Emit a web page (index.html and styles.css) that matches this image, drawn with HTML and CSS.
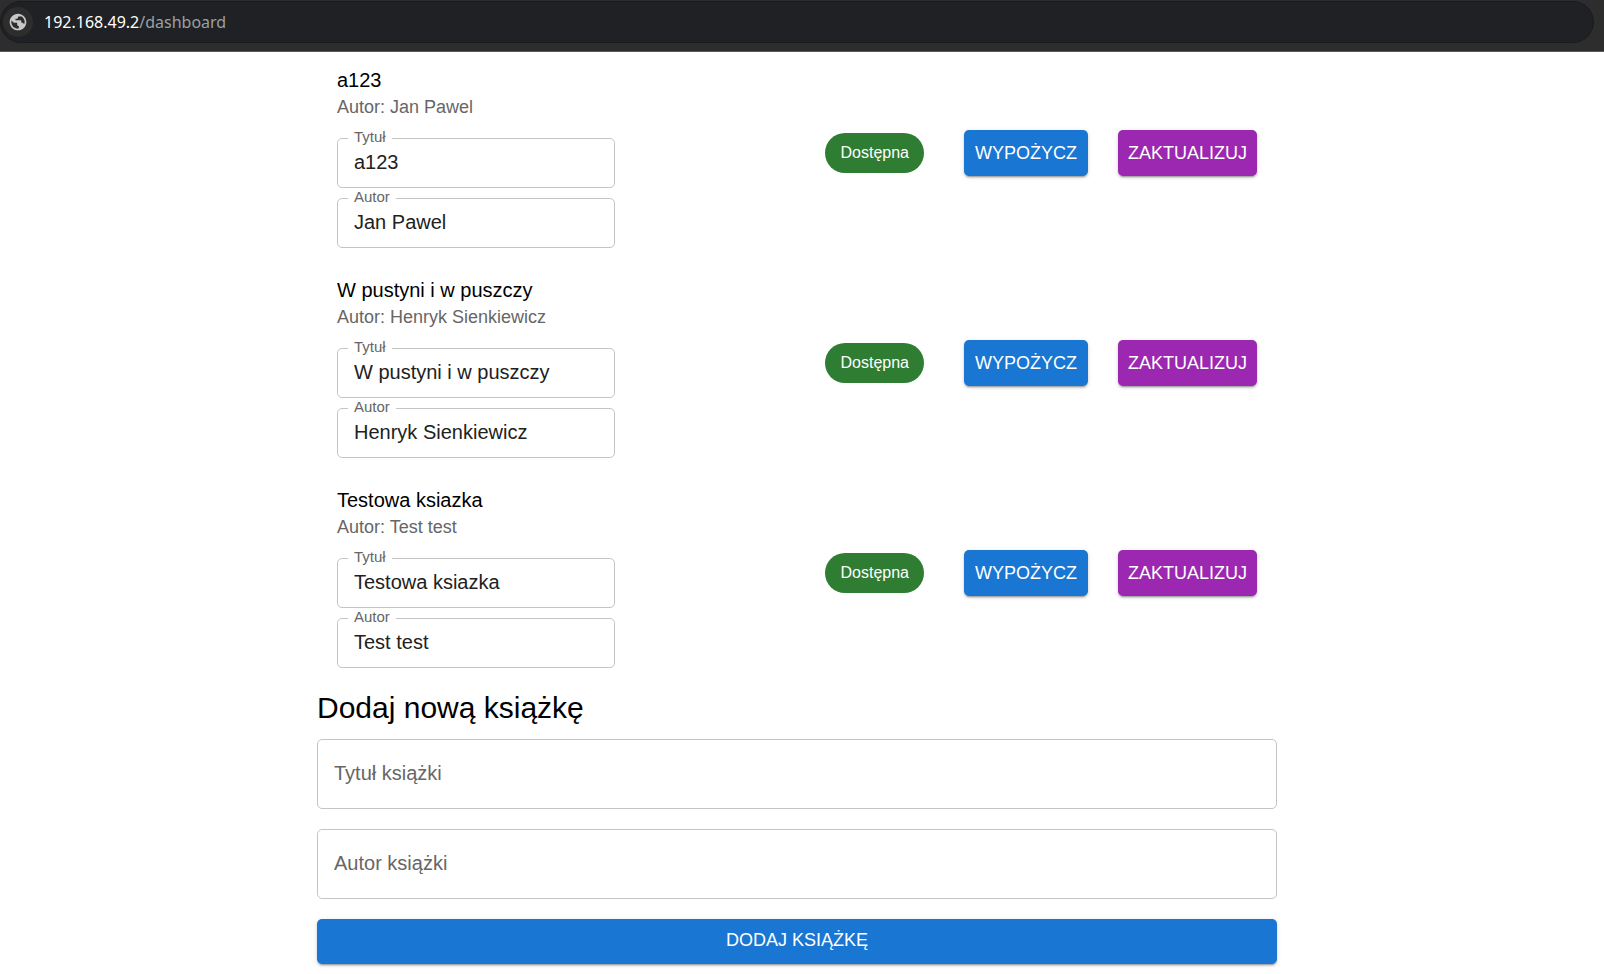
FILE: index.html
```
<!DOCTYPE html>
<html lang="pl">
<head>
<meta charset="utf-8">
<title>Dashboard</title>
<link rel="stylesheet" href="styles.css">
</head>
<body>
<header class="browser">
  <div class="address">
    <span class="site">
      <svg class="globe" viewBox="0 0 24 24" aria-hidden="true"><path d="M12 2C6.480 2 2 6.480 2 12s4.480 10 10 10 10-4.480 10-10S17.520 2 12 2zm-8 10c0-.620.080-1.210.210-1.790L7 13h4v2c0 1 .6 1.800 2 1.800v2.200c0 .400-.6.700-1 .970C7.500 19.900 4 16.400 4 12zm15.200 2.800c-.3-1.100-1.200-1.800-2.200-1.800h-1v-2c0-.6-.4-1-1-1H9V8h2c.550 0 1-.450 1-1V5.500h2c1 0 1.500-.5 1.800-.550C18.300 6.200 20 9 20 12c0 1-.3 1.900-.8 2.800z"/></svg>
    </span>
    <span class="url"><span class="host">192.168.49.2</span>/dashboard</span>
  </div>
</header>
<main class="page">
  <ul class="books">
    <li class="book">
      <div class="info">
        <div class="title">a123</div>
        <div class="author">Autor: Jan Pawel</div>
        <div class="fields">
          <div class="field"><label for="t1">Tytuł</label><input id="t1" type="text" value="a123"></div>
          <div class="field"><label for="a1">Autor</label><input id="a1" type="text" value="Jan Pawel"></div>
        </div>
      </div>
      <span class="chip">Dostępna</span>
      <div class="actions">
        <button class="btn primary" type="button">WYPOŻYCZ</button>
        <button class="btn secondary" type="button">ZAKTUALIZUJ</button>
      </div>
    </li>
    <li class="book">
      <div class="info">
        <div class="title">W pustyni i w puszczy</div>
        <div class="author">Autor: Henryk Sienkiewicz</div>
        <div class="fields">
          <div class="field"><label for="t2">Tytuł</label><input id="t2" type="text" value="W pustyni i w puszczy"></div>
          <div class="field"><label for="a2">Autor</label><input id="a2" type="text" value="Henryk Sienkiewicz"></div>
        </div>
      </div>
      <span class="chip">Dostępna</span>
      <div class="actions">
        <button class="btn primary" type="button">WYPOŻYCZ</button>
        <button class="btn secondary" type="button">ZAKTUALIZUJ</button>
      </div>
    </li>
    <li class="book">
      <div class="info">
        <div class="title">Testowa ksiazka</div>
        <div class="author">Autor: Test test</div>
        <div class="fields">
          <div class="field"><label for="t3">Tytuł</label><input id="t3" type="text" value="Testowa ksiazka"></div>
          <div class="field"><label for="a3">Autor</label><input id="a3" type="text" value="Test test"></div>
        </div>
      </div>
      <span class="chip">Dostępna</span>
      <div class="actions">
        <button class="btn primary" type="button">WYPOŻYCZ</button>
        <button class="btn secondary" type="button">ZAKTUALIZUJ</button>
      </div>
    </li>
  </ul>
  <h1 class="heading">Dodaj nową książkę</h1>
  <form class="form">
    <input class="wide" type="text" placeholder="Tytuł książki" aria-label="Tytuł książki">
    <input class="wide" type="text" placeholder="Autor książki" aria-label="Autor książki">
    <button class="btn primary" type="button">DODAJ KSIĄŻKĘ</button>
  </form>
</main>
</body>
</html>
```
FILE: styles.css
```
* { box-sizing: border-box; }

body {
  margin: 0;
  background: #fff;
  color: #000;
  font-family: "Liberation Sans", Arial, sans-serif;
  font-size: 20px;
}

input, button { font: inherit; }

.browser {
  padding: 1px 10px 8px 0;
  background: #2d2d2d;
  border-bottom: 1px solid #5a5a5a;
}

.address {
  display: flex;
  align-items: center;
  gap: 11px;
  height: 42px;
  padding-left: 2px;
  background: #202124;
  border: 1px solid #1a1b1e;
  border-radius: 21px;
}

.site {
  display: flex;
  align-items: center;
  justify-content: center;
  width: 30px;
  height: 30px;
  border-radius: 50%;
  background: #2d2d2d;
}

.globe { width: 20px; height: 20px; fill: #c7c7c7; }

.url {
  color: #9aa0a6;
  font-family: "Noto Sans", "Open Sans", sans-serif;
  font-size: 16px;
  line-height: 24px;
}

.host { color: #fff; }

.page {
  max-width: 1010px;
  margin: 0 auto;
  padding: 6px 30px 10px 20px;
}

.books {
  display: flex;
  flex-direction: column;
  gap: 20px;
  margin: 0;
  padding: 0 20px;
  list-style: none;
}

.book { display: flex; align-items: center; }

.info { flex: 1; padding-top: 8px; }

.title { line-height: 28px; }

.author { color: #666; font-size: 18px; line-height: 26px; }

.fields {
  display: flex;
  flex-direction: column;
  gap: 10px;
  width: 278px;
  padding-top: 18px;
}

.field { position: relative; }

.field label {
  position: absolute;
  top: -10px;
  left: 11px;
  padding: 0 6px;
  background: #fff;
  color: #666;
  font-size: 15px;
  line-height: 18px;
}

.field input {
  display: block;
  width: 100%;
  height: 50px;
  padding: 0 16px 2px;
  border: 1px solid #c4c4c4;
  border-radius: 5px;
  background: #fff;
  color: #212121;
}

.chip {
  padding: 0 15px;
  border-radius: 20px;
  background: #2e7d32;
  color: #fff;
  font-size: 16px;
  line-height: 40px;
}

.actions { display: flex; gap: 30px; margin-left: 40px; }

.btn {
  min-width: 124px;
  height: 46px;
  padding: 0 10px;
  border: 0;
  border-radius: 5px;
  color: #fff;
  font-size: 18px;
  box-shadow: 0 3px 1px -2px rgba(0, 0, 0, .2), 0 2px 2px rgba(0, 0, 0, .14), 0 1px 5px rgba(0, 0, 0, .12);
}

.form .btn { height: 45px; padding-bottom: 2px; }

.primary { background: #1976d2; }

.secondary { background: #9c27b0; }

.heading {
  margin: 20px 0 11px;
  font-size: 30px;
  font-weight: 400;
  line-height: 40px;
}

.form { display: flex; flex-direction: column; gap: 20px; }

.wide {
  width: 100%;
  height: 70px;
  padding: 0 16px 2px;
  border: 1px solid #c4c4c4;
  border-radius: 5px;
  background: #fff;
  color: #212121;
}

.wide::placeholder { color: #666; opacity: 1; }
```
